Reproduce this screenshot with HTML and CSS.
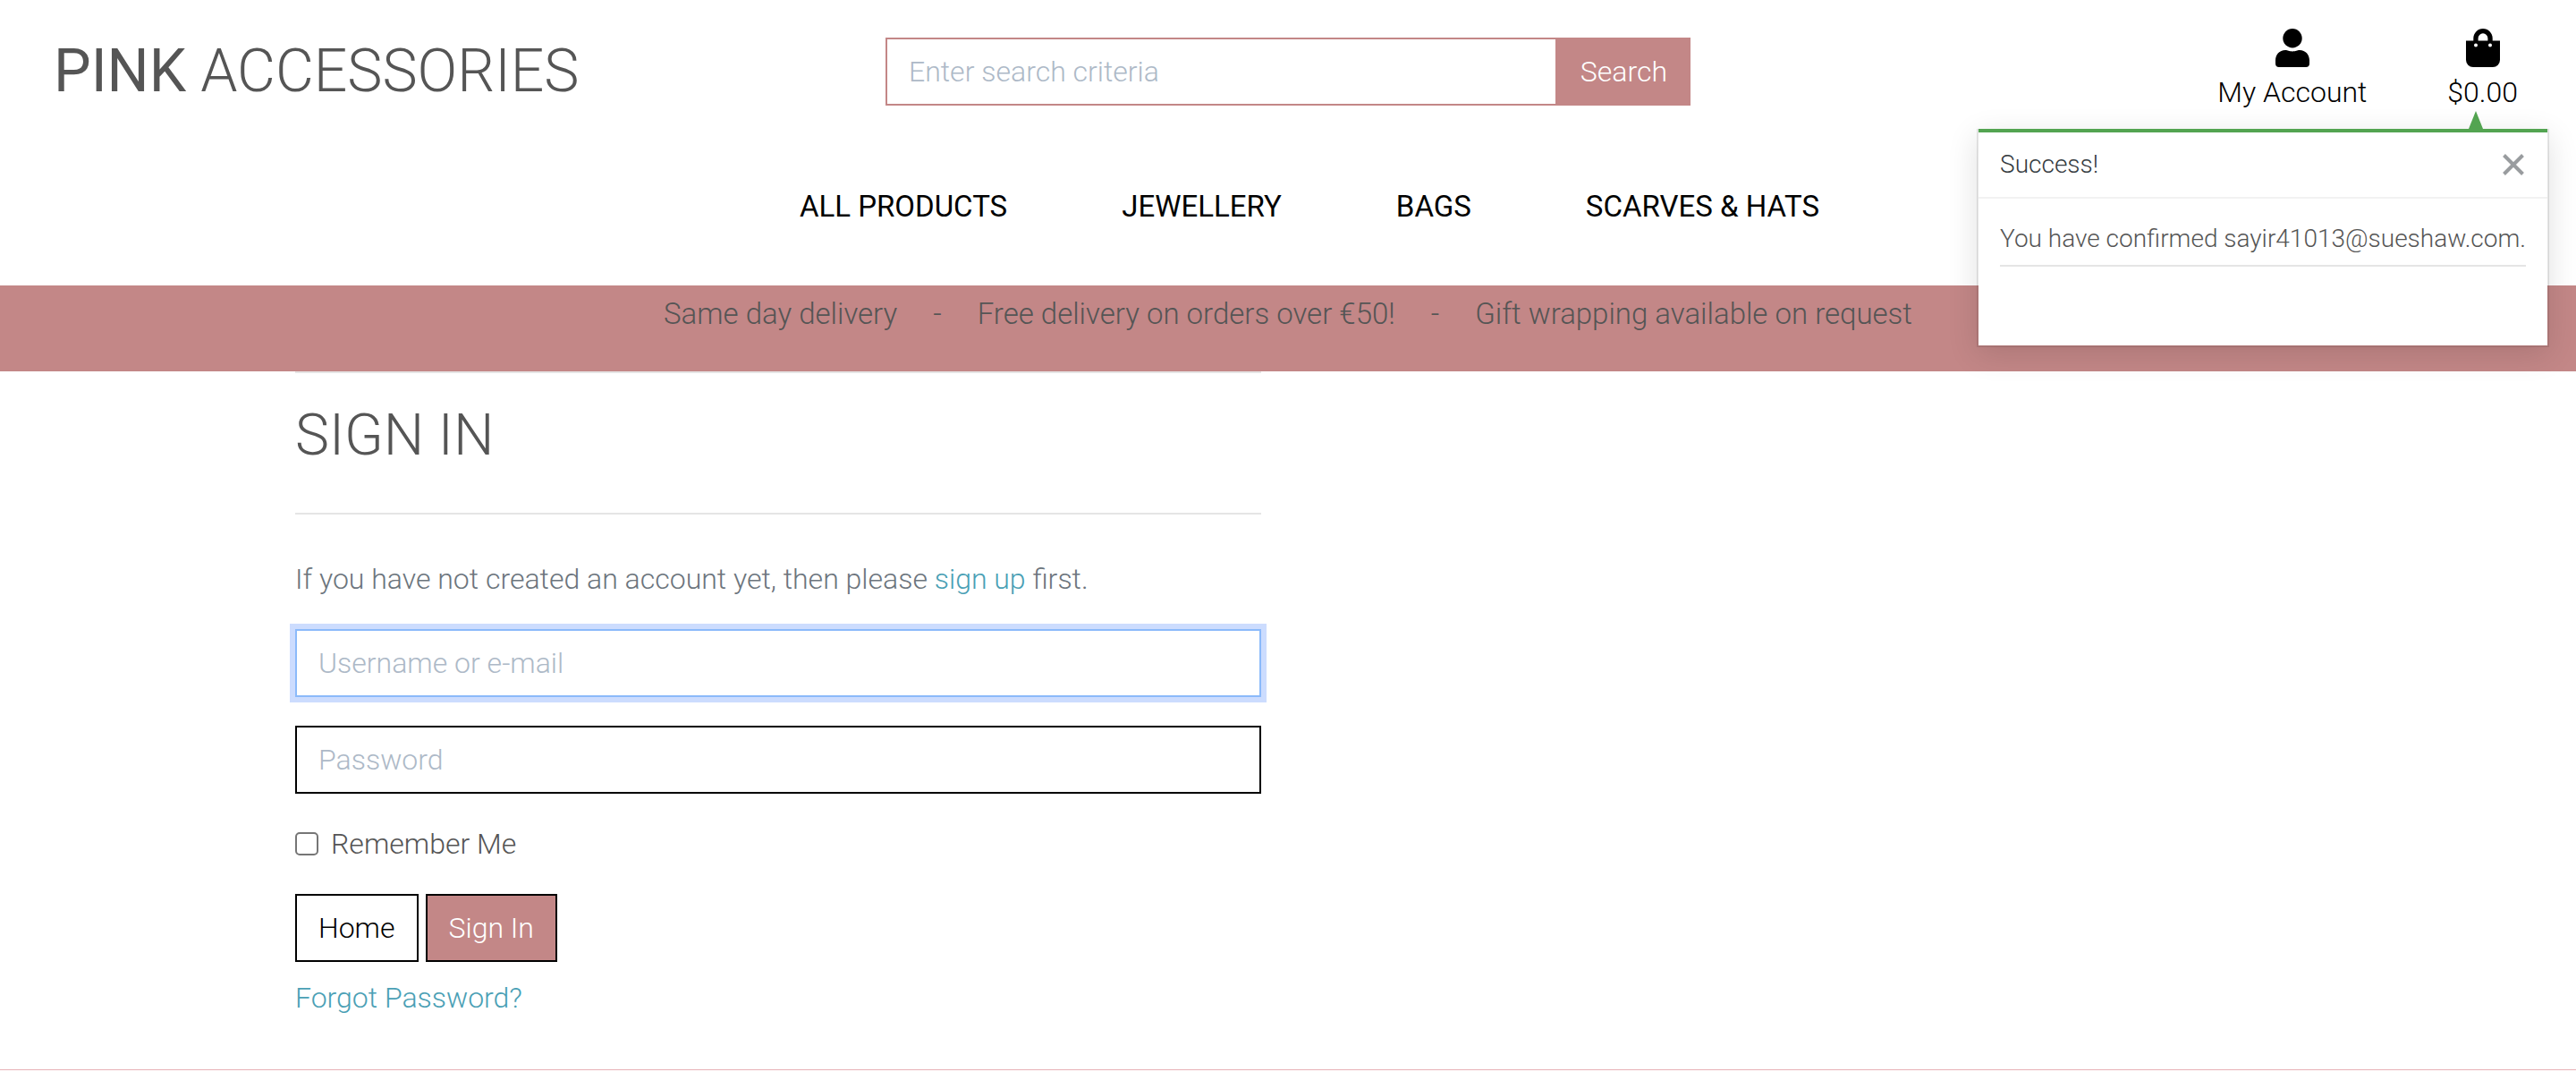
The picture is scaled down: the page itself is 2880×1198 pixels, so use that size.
FILE: index.html
```html
<!DOCTYPE html>
<html lang="en">
<head>
  <meta charset="utf-8">
  <meta name="viewport" content="width=device-width, initial-scale=1">
  <title>Pink Accessories - Sign In</title>
  <link rel="stylesheet" href="styles.css">
</head>
<body>
  <header class="header">
    <div class="header-top">
      <a class="logo" href="#"><strong>PINK</strong> ACCESSORIES</a>
      <form class="search" role="search">
        <input class="search-input" type="search" name="q" placeholder="Enter search criteria" aria-label="Search criteria">
        <button class="search-button" type="submit">Search</button>
      </form>
      <div class="actions">
        <a class="action" href="#">
          <svg class="action-icon" width="38" height="43" viewBox="0 0 38 43" aria-hidden="true">
            <circle cx="19" cy="10.7" r="10.7"/>
            <path d="M11 24c3 0 4 1.400 8 1.400S24 24 27 24c6.500 0 11 5 11 11.500V39a4 4 0 0 1-4 4H4a4 4 0 0 1-4-4v-3.500C0 29 4.500 24 11 24z"/>
          </svg>
          <span>My Account</span>
        </a>
        <a class="action" href="#">
          <svg class="action-icon" width="38" height="43" viewBox="0 0 38 43" aria-hidden="true">
            <path fill-rule="evenodd" d="M0 13.500h8.300v-2.800a10.700 10.700 0 0 1 21.400 0v2.800H38V35a8 8 0 0 1-8 8H8a8 8 0 0 1-8-8zM13.600 13.500h10.800v-2.800a5.400 5.400 0 0 0-10.800 0zM11 16.500a2 2 0 1 0 0 4 2 2 0 1 0 0-4zM27 16.500a2 2 0 1 0 0 4 2 2 0 1 0 0-4z"/>
          </svg>
          <span>$0.00</span>
        </a>
      </div>
    </div>
    <nav class="nav" aria-label="Main">
      <a href="#">ALL PRODUCTS</a>
      <a href="#">JEWELLERY</a>
      <a href="#">BAGS</a>
      <a href="#">SCARVES &amp; HATS</a>
    </nav>
    <div class="toast" role="status">
      <div class="toast-header">
        <span>Success!</span>
        <button class="toast-close" type="button" aria-label="Close">
          <svg width="24" height="24" viewBox="0 0 24 24" aria-hidden="true"><path d="M1.500 1.500l21 21M22.500 1.500l-21 21"/></svg>
        </button>
      </div>
      <div class="toast-body">
        <p class="toast-message">You have confirmed sayir41013@sueshaw.com.</p>
      </div>
    </div>
  </header>

  <div class="banner">
    <span>Same day delivery</span>
    <span>-</span>
    <span>Free delivery on orders over €50!</span>
    <span>-</span>
    <span>Gift wrapping available on request</span>
  </div>

  <main class="container">
    <section class="sign-in">
      <h1 class="title">SIGN IN</h1>
      <p class="intro">If you have not created an account yet, then please <a href="#">sign up</a> first.</p>
      <form class="form">
        <input class="field" type="text" name="login" placeholder="Username or e-mail" aria-label="Username or e-mail" autofocus>
        <input class="field" type="password" name="password" placeholder="Password" aria-label="Password">
        <div class="remember">
          <input class="checkbox" type="checkbox" id="remember" name="remember">
          <label for="remember">Remember Me</label>
        </div>
        <div class="buttons">
          <a class="button" href="#">Home</a>
          <button class="button button-primary" type="submit">Sign In</button>
        </div>
      </form>
      <a class="forgot" href="#">Forgot Password?</a>
    </section>
  </main>
  <footer class="footer"></footer>
</body>
</html>
```
FILE: styles.css
```css
:root {
  --pink: #c38787;
  --text: #555;
  --muted: #6c757d;
  --link: #4aa0b5;
  --line: #e5e5e5;
  --placeholder: #adb9c7;
  --success: #53a451;
}

* {
  box-sizing: border-box;
}

body {
  margin: 0;
  background: #fff;
  color: var(--text);
  font: 300 32px/48px Roboto, sans-serif;
}

a {
  color: var(--link);
  text-decoration: none;
}

p,
h1 {
  margin: 0;
}

input,
button {
  border-radius: 0;
  font: inherit;
}

input::placeholder {
  color: var(--placeholder);
  opacity: 1;
}

/* Header */

.header {
  position: relative;
  padding: 32px 60px 64px;
}

.header-top {
  display: grid;
  grid-template-columns: repeat(3, 1fr);
  gap: 30px;
  align-items: center;
}

.logo {
  color: var(--text);
  font-size: 66px;
  line-height: 80px;
  white-space: nowrap;
}

.logo strong {
  font-weight: 400;
}

.search {
  display: flex;
}

.search-input {
  flex: 1;
  min-width: 0;
  padding: 12px 24px;
  border: 2px solid var(--pink);
  background: #fff;
  appearance: none;
  outline: none;
}

.search-button {
  padding: 12px 24px;
  border: 2px solid var(--pink);
  background: var(--pink);
  color: #fff;
}

.actions {
  display: flex;
  justify-content: flex-end;
  gap: 90px;
  padding-right: 5px;
}

.action {
  display: flex;
  flex-direction: column;
  align-items: center;
  gap: 4px;
  color: #000;
}

.action-icon {
  display: block;
  fill: #000;
}

.nav {
  display: flex;
  justify-content: center;
  gap: 128px;
  margin-top: 80px;
  padding-left: 48px;
  font-size: 33px;
  font-weight: 400;
}

.nav a {
  color: #000;
}

/* Notification under the basket */

.toast {
  position: absolute;
  top: 144px;
  right: 30px;
  z-index: 1;
  border: solid rgba(0, 0, 0, 0.1);
  border-width: 0 2px 2px;
  background: #fff;
  background-clip: padding-box;
  box-shadow: 0 8px 32px rgba(0, 0, 0, 0.12);
  font-size: 28px;
  line-height: 42px;
}

.toast::before {
  content: "";
  position: absolute;
  right: 72px;
  bottom: 100%;
  border: solid transparent;
  border-width: 0 8px 20px;
  border-bottom-color: var(--success);
}

.toast-header {
  display: flex;
  justify-content: space-between;
  align-items: center;
  padding: 15px 26px 15px 24px;
  border-top: 4px solid var(--success);
  border-bottom: 2px solid #f2f2f2;
  color: #343a40;
}

.toast-close {
  display: flex;
  padding: 0;
  border: 0;
  background: none;
}

.toast-close svg {
  fill: none;
  stroke: #999c9f;
  stroke-width: 4;
}

.toast-body {
  padding: 24px 24px 88px;
}

.toast-message {
  padding-bottom: 8px;
  border-bottom: 2px solid var(--line);
  white-space: nowrap;
}

/* Delivery banner */

.banner {
  display: flex;
  justify-content: center;
  gap: 40px;
  padding: 8px 60px 40px;
  background: var(--pink);
  font-size: 33px;
}

/* Sign in */

.container {
  max-width: 2280px;
  margin: 0 auto;
  padding: 0 30px;
}

.sign-in {
  width: calc(50% - 30px);
  padding-bottom: 56px;
  border-top: 2px solid var(--line);
}

.title {
  padding: 30px 0 46px;
  border-bottom: 2px solid var(--line);
  font-size: 64px;
  font-weight: 300;
  line-height: 80px;
}

.intro {
  margin: 48px 0 32px;
  color: var(--muted);
}

.form {
  display: grid;
  gap: 32px;
  margin-bottom: 16px;
}

.field {
  width: 100%;
  padding: 12px 24px;
  border: 2px solid #000;
  background: #fff;
}

.field:focus {
  border-color: #8bbafa;
  outline: none;
  box-shadow: 0 0 0 6px #ccdcfe;
}

.remember {
  display: flex;
  align-items: center;
  gap: 14px;
}

.checkbox {
  width: 26px;
  height: 26px;
  margin: 0;
  border: 2px solid #767676;
  border-radius: 5px;
  background: #fff;
  appearance: none;
}

.checkbox:checked {
  background: var(--pink);
}

.buttons {
  display: flex;
  gap: 8px;
}

.button {
  padding: 12px 24px;
  border: 2px solid #000;
  background: #fff;
  color: #000;
}

.button-primary {
  background: var(--pink);
  color: #fff;
}

.forgot {
  display: block;
}

.footer {
  border-top: 1px solid #e8b0b5;
}
```
